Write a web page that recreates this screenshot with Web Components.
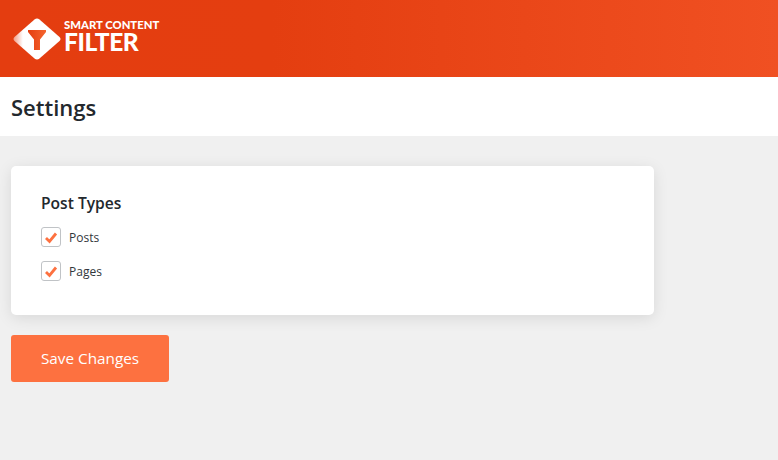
<!DOCTYPE html>
<html>
<head>
<meta charset="utf-8">
<title>Settings</title>
<style>
  html, body { margin: 0; padding: 0; height: 100%; }
  body { background: #f0f0f0; font-family: "Open Sans", "Noto Sans", sans-serif; color: #23282d; }
</style>
</head>
<body>
<scf-header></scf-header>
<scf-title>Settings</scf-title>
<scf-main>
  <scf-card heading="Post Types">
    <scf-check>Posts</scf-check>
    <scf-check>Pages</scf-check>
  </scf-card>
  <scf-button>Save Changes</scf-button>
</scf-main>
<script>
class ScfHeader extends HTMLElement {
  constructor() {
    super();
    this.attachShadow({ mode: 'open' }).innerHTML = `
      <style>
        :host {
          display: flex;
          align-items: center;
          height: 77px;
          padding-left: 13px;
          background: linear-gradient(90deg, #e43d10 0%, #e43e10 35%, #f05022 100%);
          color: #fff;
          font-family: "Lato", sans-serif;
        }
        svg { display: block; }
        .words { margin-left: 3px; margin-top: -7px; display: flex; flex-direction: column; }
        .small { font-size: 11.3px; font-weight: 900; line-height: 12px; white-space: nowrap; }
        .big { font-size: 24.5px; font-weight: 900; line-height: 21px; letter-spacing: -.4px; }
      </style>
      <svg width="48" height="44" viewBox="0 0 48 44">
        <defs>
          <linearGradient id="fade" x1="0" x2="1" y1="0" y2="0">
            <stop offset="0" stop-color="#fff" stop-opacity=".5"/>
            <stop offset=".2" stop-color="#fff"/>
          </linearGradient>
          <linearGradient id="fun" x1="0" x2="1" y1="0" y2="0">
            <stop offset="0" stop-color="#e43e10"/>
            <stop offset="1" stop-color="#f5652f"/>
          </linearGradient>
        </defs>
        <path d="M21.500 2.500 Q24 .5 26.500 2.500 L46.500 20 Q48.500 22 46.500 24 L26.500 41.500 Q24 43.500 21.500 41.500 L1.500 24 Q-.5 22 1.500 20Z" fill="url(#fade)"/>
        <path d="M15 13 H33 V15 L27 22.500 V33 H21 V22.500 L15 15Z" fill="url(#fun)"/>
      </svg>
      <div class="words">
        <div class="small">SMART CONTENT</div>
        <div class="big">FILTER</div>
      </div>`;
  }
}

class ScfTitle extends HTMLElement {
  constructor() {
    super();
    this.attachShadow({ mode: 'open' }).innerHTML = `
      <style>
        :host {
          display: flex;
          align-items: center;
          height: 59px;
          padding-left: 11px;
          background: #fff;
          font-size: 22px;
          font-weight: 600;
          color: #23282d;
        }
      </style>
      <slot></slot>`;
  }
}

class ScfMain extends HTMLElement {
  constructor() {
    super();
    this.attachShadow({ mode: 'open' }).innerHTML = `
      <style>
        :host {
          display: flex;
          flex-direction: column;
          align-items: flex-start;
          gap: 20px;
          padding: 30px 11px;
        }
      </style>
      <slot></slot>`;
  }
}

class ScfCard extends HTMLElement {
  constructor() {
    super();
    this.attachShadow({ mode: 'open' }).innerHTML = `
      <style>
        :host {
          display: block;
          box-sizing: border-box;
          width: 643px;
          height: 149px;
          padding: 26px 30px 0;
          background: #fff;
          border-radius: 5px;
          box-shadow: 0 3px 15px rgba(0, 0, 0, .1);
        }
        h2 { margin: 0 0 13px; font-size: 15.6px; line-height: 22px; font-weight: 600; color: #23282d; }
        .list { display: flex; flex-direction: column; gap: 14px; }
      </style>
      <h2></h2>
      <div class="list"><slot></slot></div>`;
    this.shadowRoot.querySelector('h2').textContent = this.getAttribute('heading');
  }
}

class ScfCheck extends HTMLElement {
  constructor() {
    super();
    this.attachShadow({ mode: 'open' }).innerHTML = `
      <style>
        :host {
          display: flex;
          align-items: center;
          gap: 8px;
          height: 20px;
          font-size: 12px;
          color: #32373c;
        }
        .box {
          box-sizing: border-box;
          width: 20px;
          height: 20px;
          border: 1px solid #c0c3c6;
          border-radius: 3px;
          background: #fff;
          display: flex;
          align-items: center;
          justify-content: center;
        }
        svg { display: block; }
      </style>
      <span class="box">
        <svg width="14" height="13" viewBox="0 0 14 13"><path d="M2 7 L5.500 10.500 L12 2.500" fill="none" stroke="#fd7140" stroke-width="2.800"/></svg>
      </span>
      <slot></slot>`;
  }
}

class ScfButton extends HTMLElement {
  constructor() {
    super();
    this.attachShadow({ mode: 'open' }).innerHTML = `
      <style>
        :host {
          display: flex;
          align-items: center;
          justify-content: center;
          box-sizing: border-box;
          width: 158px;
          height: 47px;
          padding-bottom: 2px;
          background: #fd7140;
          border-radius: 3px;
          color: #fff;
          font-size: 15.3px;
          cursor: pointer;
        }
      </style>
      <slot></slot>`;
  }
}

customElements.define('scf-header', ScfHeader);
customElements.define('scf-title', ScfTitle);
customElements.define('scf-main', ScfMain);
customElements.define('scf-card', ScfCard);
customElements.define('scf-check', ScfCheck);
customElements.define('scf-button', ScfButton);
</script>
</body>
</html>
